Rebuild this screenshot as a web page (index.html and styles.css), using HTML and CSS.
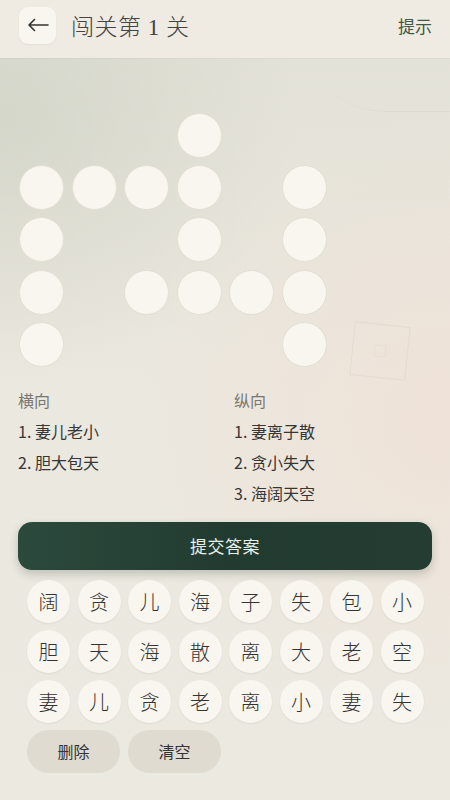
FILE: index.html
```html
<!DOCTYPE html>
<html lang="zh">
<head>
<meta charset="utf-8">
<title>闯关第 1 关</title>
<link rel="stylesheet" href="styles.css">
</head>
<body>
<div class="app">
  <header class="topbar">
    <button class="back" aria-label="返回">
      <svg width="22" height="14" viewBox="0 0 22 14"><path d="M21 7H2M7.5 1.5L2 7l5.5 5.5" fill="none" stroke="#333" stroke-width="1.6" stroke-linecap="round" stroke-linejoin="round"/></svg>
    </button>
    <h1 class="title">闯关第 1 关</h1>
    <span class="hint">提示</span>
  </header>

  <main class="main">
    <div class="deco-arc"></div>
    <div class="deco-stamp"><div class="deco-stamp-inner"></div></div>

    <div class="board">
      <div class="cell c4 r1"></div>
      <div class="cell c1 r2"></div><div class="cell c2 r2"></div><div class="cell c3 r2"></div><div class="cell c4 r2"></div><div class="cell c6 r2"></div>
      <div class="cell c1 r3"></div><div class="cell c4 r3"></div><div class="cell c6 r3"></div>
      <div class="cell c1 r4"></div><div class="cell c3 r4"></div><div class="cell c4 r4"></div><div class="cell c5 r4"></div><div class="cell c6 r4"></div>
      <div class="cell c1 r5"></div><div class="cell c6 r5"></div>
    </div>

    <section class="clues">
      <div class="clue-col">
        <div class="clue-head">横向</div>
        <div class="clue">1. 妻儿老小</div>
        <div class="clue">2. 胆大包天</div>
      </div>
      <div class="clue-col">
        <div class="clue-head">纵向</div>
        <div class="clue">1. 妻离子散</div>
        <div class="clue">2. 贪小失大</div>
        <div class="clue">3. 海阔天空</div>
      </div>
    </section>

    <button class="submit">提交答案</button>

    <div class="keys">
      <span class="key">阔</span><span class="key">贪</span><span class="key">儿</span><span class="key">海</span><span class="key">子</span><span class="key">失</span><span class="key">包</span><span class="key">小</span>
      <span class="key">胆</span><span class="key">天</span><span class="key">海</span><span class="key">散</span><span class="key">离</span><span class="key">大</span><span class="key">老</span><span class="key">空</span>
      <span class="key">妻</span><span class="key">儿</span><span class="key">贪</span><span class="key">老</span><span class="key">离</span><span class="key">小</span><span class="key">妻</span><span class="key">失</span>
    </div>

    <div class="actions">
      <button class="action">删除</button>
      <button class="action">清空</button>
    </div>
  </main>
</div>
</body>
</html>
```

FILE: styles.css
```css
* { box-sizing: border-box; }
html, body { margin: 0; padding: 0; }
body {
  width: 450px;
  height: 800px;
  overflow: hidden;
  font-family: "Noto Sans CJK SC", "Noto Sans", sans-serif;
  color: #333;
  background: #ebe8df;
}
.app {
  width: 450px;
  height: 800px;
  display: flex;
  flex-direction: column;
  overflow: hidden;
}
.topbar {
  height: 58px;
  flex: none;
  display: flex;
  align-items: center;
  padding: 0 18px 0 19px;
  background: #efebe2;
  box-shadow: 0 1px 0 rgba(0,0,0,0.03);
  position: relative;
  z-index: 2;
}
.back {
  width: 37px;
  height: 37px;
  margin-top: -8px;
  border: none;
  border-radius: 9px;
  background: #f8f6ef;
  box-shadow: 0 1px 2px rgba(0,0,0,0.05);
  display: flex;
  align-items: center;
  justify-content: center;
  padding: 0;
}
.title {
  margin: -8px 0 0 15px;
  font-family: "Liberation Serif", "Noto Sans CJK SC", serif;
  font-weight: 300;
  font-size: 23px;
  color: #444;
  letter-spacing: 0.5px;
  flex: 1;
}
.hint {
  margin-top: -8px;
  font-size: 17px;
  color: #3d5a46;
}
.main {
  flex: 1;
  position: relative;
  overflow: hidden;
  padding: 55px 0 0;
  background:
    radial-gradient(ellipse 300px 260px at 0px 60px, rgba(205,208,195,0.65), rgba(205,208,195,0) 100%),
    radial-gradient(ellipse 320px 320px at 450px 360px, rgba(240,225,215,0.8), rgba(240,225,215,0) 100%),
    linear-gradient(180deg, #e3e2d8 0%, #ebe8df 45%, #ebe9e0 100%);
}
.deco-arc {
  position: absolute;
  left: 325px;
  top: -22px;
  width: 125px;
  height: 76px;
  border-radius: 50% 0 0 50%;
  border-bottom: 1px solid rgba(0,0,0,0.03);
}
.deco-stamp {
  position: absolute;
  left: 352px;
  top: 266px;
  width: 56px;
  height: 54px;
  border: 1px solid rgba(170,140,130,0.1);
  transform: rotate(6deg);
  display: flex;
  align-items: center;
  justify-content: center;
}
.deco-stamp-inner {
  width: 12px;
  height: 12px;
  border: 1px solid rgba(170,140,130,0.06);
}
.board {
  margin-left: 19px;
  display: grid;
  grid-template-columns: repeat(6, 45px);
  grid-template-rows: repeat(5, 45px);
  column-gap: 7.6px;
  row-gap: 7.2px;
  position: relative;
}
.cell {
  width: 45px;
  height: 45px;
  border-radius: 50%;
  background: #f8f6ee;
  border: 1.5px solid #e3dfd2;
}
.c1 { grid-column: 1; } .c2 { grid-column: 2; } .c3 { grid-column: 3; }
.c4 { grid-column: 4; } .c5 { grid-column: 5; } .c6 { grid-column: 6; }
.r1 { grid-row: 1; } .r2 { grid-row: 2; } .r3 { grid-row: 3; }
.r4 { grid-row: 4; } .r5 { grid-row: 5; }

.clues {
  margin-top: 18px;
  padding-left: 18px;
  display: grid;
  grid-template-columns: 216px 1fr;
  position: relative;
}
.clue-head, .clue {
  line-height: 31px;
  font-size: 16px;
}
.clue-head { color: #787870; }
.clue { color: #363636; }

.submit {
  display: block;
  margin: 13px 18px 0;
  width: 414px;
  height: 48px;
  border: none;
  border-radius: 14px;
  background: linear-gradient(90deg, #2b4a3c 0%, #223b30 50%, #243c31 100%);
  box-shadow: 0 4px 10px rgba(30,50,40,0.22);
  color: #e8eee8;
  font-family: "Noto Sans CJK SC", sans-serif;
  font-size: 17px;
  letter-spacing: 0.5px;
  position: relative;
}
.keys {
  margin: 10px 0 0 27px;
  display: grid;
  grid-template-columns: repeat(8, 43px);
  grid-auto-rows: 43px;
  column-gap: 7.5px;
  row-gap: 7px;
  position: relative;
}
.key {
  width: 43px;
  height: 43px;
  border-radius: 50%;
  background: #f8f6ef;
  box-shadow: 0 1px 2px rgba(0,0,0,0.06);
  display: flex;
  align-items: center;
  justify-content: center;
  font-size: 20px;
  font-weight: 300;
  color: #333;
}
.actions {
  margin: 7px 0 0 27px;
  display: flex;
  gap: 8px;
  position: relative;
}
.action {
  width: 93px;
  height: 43px;
  border: none;
  border-radius: 22px;
  background: #e0dbd0;
  color: #333;
  font-family: "Noto Sans CJK SC", sans-serif;
  font-size: 16px;
  padding: 0;
}
```
